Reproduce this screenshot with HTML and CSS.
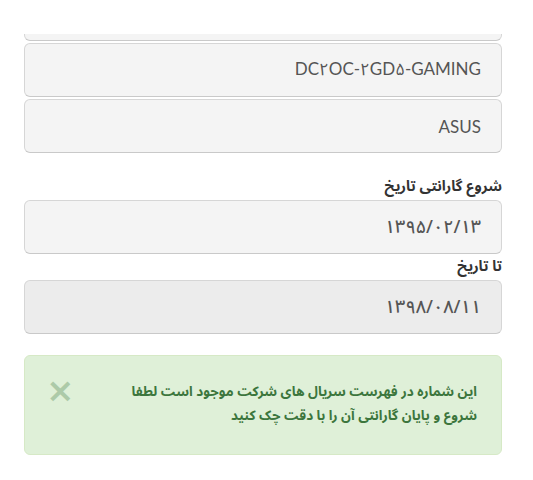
FILE: index.html
```html
<!DOCTYPE html>
<html lang="fa" dir="rtl">
<head>
  <meta charset="UTF-8" />
  <title>استعلام گارانتی</title>
  <link rel="stylesheet" href="styles.css">
</head>
<body>
  <div class="form">
    <div class="field field-cut"></div>
    <div class="field">DC۲OC-۲GD۵-GAMING</div>
    <div class="field">ASUS</div>

    <label class="label first">شروع گارانتی تاریخ</label>
    <div class="field digits">۱۳۹۵/۰۲/۱۳</div>

    <label class="label">تا تاریخ</label>
    <div class="field digits disabled">۱۳۹۸/۰۸/۱۱</div>

    <div class="alert">
      <span class="close">&times;</span>
      <p>این شماره در فهرست سریال های شرکت موجود است لطفا<br>شروع و پایان گارانتی آن را با دقت چک کنید</p>
    </div>
  </div>
</body>
</html>
```

FILE: styles.css
```css
body {
  margin: 0;
  background: #fff;
  font-family: Lato, "Noto Sans Arabic", "DejaVu Sans", sans-serif;
  color: #555;
  overflow: hidden;
}
.form {
  display: flex;
  flex-direction: column;
  gap: 2px;
  padding: 0 31px 0 24px;
}
.field {
  box-sizing: border-box;
  height: 54px;
  display: flex;
  align-items: center;
  padding-right: 20px;
  background: #f4f4f4;
  border: 1px solid #d6d6d6;
  border-bottom-color: #c9c9c9;
  border-radius: 6px;
  font-size: 17px;
  color: #555;
}
.field-cut {
  height: 7px;
  margin-top: 34px;
  border-top: none;
  border-radius: 0 0 6px 6px;
}
.digits {
  font-family: "Noto Sans Arabic", "DejaVu Sans", sans-serif;
  font-size: 18px;
  font-weight: 500;
  letter-spacing: 2.5px;
}
.disabled {
  background: #ececec;
}
.label {
  display: block;
  height: 22px;
  line-height: 22px;
  font-family: "Noto Sans Arabic", "DejaVu Sans", sans-serif;
  font-weight: bold;
  font-size: 14.5px;
  color: #333;
}
.label.first {
  margin-top: 21px;
}
.alert {
  position: relative;
  margin-top: 19px;
  padding: 24px 24px 26px;
  background: #dff0d8;
  border: 1px solid #d6e9c6;
  border-radius: 6px;
  color: #3c763d;
}
.alert p {
  margin: 0;
  font-family: "Noto Sans Arabic", "DejaVu Sans", sans-serif;
  font-weight: bold;
  font-size: 13.5px;
  line-height: 24px;
}
.close {
  position: absolute;
  left: 21px;
  top: 17px;
  font-family: "DejaVu Sans", sans-serif;
  font-size: 34px;
  font-weight: bold;
  line-height: 34px;
  color: #3c763d;
  opacity: 0.3;
}
```
